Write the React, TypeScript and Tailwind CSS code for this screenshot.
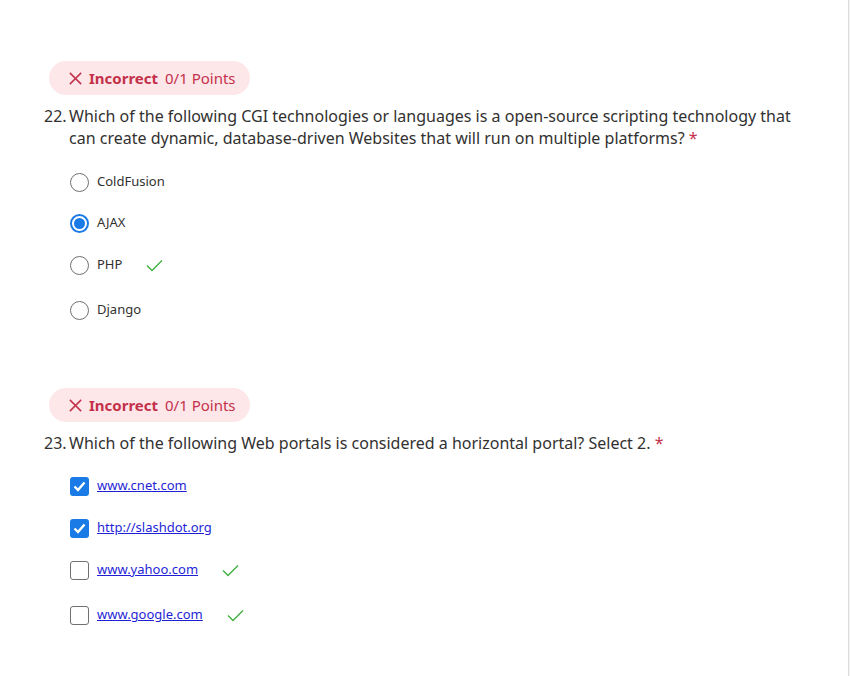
import React from "react";

const font = { fontFamily: '"Noto Sans", "Open Sans", sans-serif' };

function Badge() {
  return (
    <div className="ml-[5px] inline-flex h-[34px] items-center rounded-full bg-[#fde7e9] pl-[19px] pr-[14px] text-[15px] text-[#c4314b]">
      <svg width="15" height="15" viewBox="0 0 16 16" className="mr-[6px]">
        <path d="M2 2 L14 14 M14 2 L2 14" stroke="#c4314b" strokeWidth="1.6" fill="none" />
      </svg>
      <span className="font-bold">Incorrect</span>
      <span className="ml-[7px]">0/1 Points</span>
    </div>
  );
}

function Check() {
  return (
    <svg width="17" height="13" viewBox="0 0 17 13" className="ml-[24px]">
      <path d="M1 6.5 L6 11.5 L16 1.5" stroke="#3fae3f" strokeWidth="1.3" fill="none" />
    </svg>
  );
}

function Radio({ on }: { on?: boolean }) {
  return (
    <span
      className={
        "flex h-[19px] w-[19px] items-center justify-center rounded-full border " +
        (on ? "border-[#1a7ae6] border-2" : "border-[#707070]")
      }
    >
      {on && <span className="h-[11px] w-[11px] rounded-full bg-[#1a7ae6]" />}
    </span>
  );
}

function Box({ on }: { on?: boolean }) {
  return on ? (
    <span className="flex h-[19px] w-[19px] items-center justify-center rounded-[3px] bg-[#1a7ae6]">
      <svg width="13" height="11" viewBox="0 0 13 11">
        <path d="M1.5 5.5 L5 9 L11.5 1.5" stroke="#fff" strokeWidth="2.4" fill="none" />
      </svg>
    </span>
  ) : (
    <span className="h-[19px] w-[19px] rounded-[3px] border border-[#707070]" />
  );
}

export default function App() {
  const radios = [
    { t: "ColdFusion", mt: "mt-[23px]" },
    { t: "AJAX", on: true, mt: "mt-[21px]" },
    { t: "PHP", ok: true, mt: "mt-[22px]" },
    { t: "Django", mt: "mt-[25px]" },
  ];
  const boxes = [
    { t: "www.cnet.com", on: true, mt: "mt-[22px]" },
    { t: "http://slashdot.org", on: true, mt: "mt-[22px]" },
    { t: "www.yahoo.com", ok: true, mt: "mt-[22px]" },
    { t: "www.google.com", ok: true, mt: "mt-[25px]" },
  ];
  return (
    <div className="flex min-h-[676px] w-[850px] bg-white text-[#323130]" style={font}>
      <div className="flex-1 pl-[44px] pt-[61px]">
        <Badge />
        <div className="mt-[10px] flex text-[16px] leading-[22px]">
          <span className="w-[25px] shrink-0">22.</span>
          <span className="w-[735px]">
            Which of the following CGI technologies or languages is a open-source scripting technology that can
            create dynamic, database-driven Websites that will run on multiple platforms?{" "}
            <span className="text-[#c4314b]">*</span>
          </span>
        </div>
        <div className="pl-[26px]">
          {radios.map((r) => (
            <div key={r.t} className={"flex h-[20px] items-center text-[13px] " + r.mt}>
              <Radio on={r.on} />
              <span className="ml-[8px]">{r.t}</span>
              {r.ok && <Check />}
            </div>
          ))}
        </div>

        <div className="mt-[68px]">
          <Badge />
        </div>
        <div className="mt-[10px] flex text-[16px] leading-[22px]">
          <span className="w-[25px] shrink-0">23.</span>
          <span>
            Which of the following Web portals is considered a horizontal portal? Select 2.{" "}
            <span className="text-[#c4314b]">*</span>
          </span>
        </div>
        <div className="pl-[26px]">
          {boxes.map((b) => (
            <div key={b.t} className={"flex h-[20px] items-center text-[13px] " + b.mt}>
              <Box on={b.on} />
              <span className="ml-[8px] text-[#1f1fd6] underline">{b.t}</span>
              {b.ok && <Check />}
            </div>
          ))}
        </div>
      </div>
      <div className="w-[2px] border-l border-[#dcdcdc] bg-[#f4f4f4]" />
    </div>
  );
}
